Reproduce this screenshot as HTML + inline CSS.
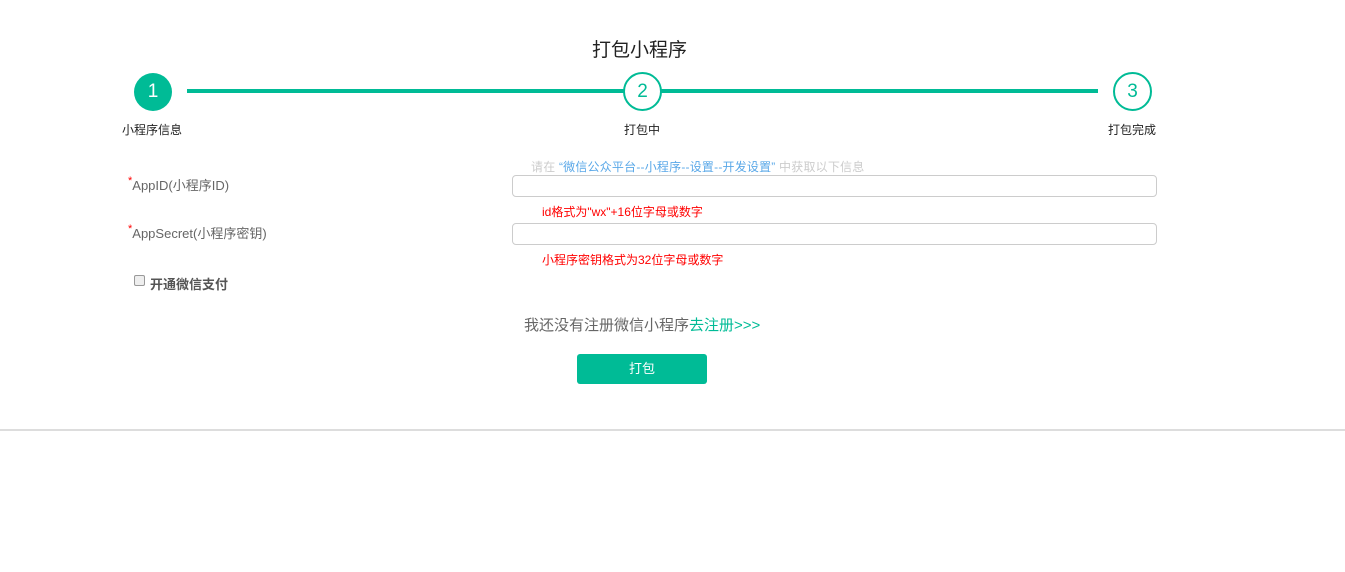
<!DOCTYPE html>
<html><head><meta charset="utf-8"><style>
body{margin:0;width:1345px;height:572px;background:#fff;position:relative;font-family:"Liberation Sans","Noto Sans CJK SC",sans-serif;overflow:hidden}
.a{position:absolute;white-space:nowrap}
.c{position:absolute;width:36px;height:36px;border-radius:50%;box-sizing:border-box;text-align:center;line-height:36px;font-size:19px}
.in{position:absolute;left:512px;width:645px;height:22px;border:1px solid #ccc;border-radius:4px;box-sizing:border-box}
</style></head><body>
<div class="a" style="left:592px;top:35px;font-size:19px;color:#222">打包小程序</div>
<div class="a" style="left:187px;top:89px;width:911px;height:4px;background:#00bb96"></div>
<div class="c" style="left:134px;top:73px;background:#00bb96;color:#fff;width:38px;height:38px;line-height:38px">1</div>
<div class="c" style="left:623px;top:72px;border:2px solid #00bb96;color:#00bb96;background:#fff;width:39px;height:39px;line-height:35px">2</div>
<div class="c" style="left:1113px;top:72px;border:2px solid #00bb96;color:#00bb96;background:#fff;width:39px;height:39px;line-height:35px">3</div>
<div class="a" style="left:122px;top:121px;font-size:12px;color:#222">小程序信息</div>
<div class="a" style="left:624px;top:121px;font-size:12px;color:#222">打包中</div>
<div class="a" style="left:1108px;top:121px;font-size:12px;color:#222">打包完成</div>
<div class="a" style="left:531px;top:158px;font-size:12px;color:#ccc;letter-spacing:0.2px">请在 <span style="color:#5aa8e8">“微信公众平台--小程序--设置--开发设置”</span> 中获取以下信息</div>
<div class="a" style="left:128px;top:175px;font-size:13px;color:#666"><span style="color:red;vertical-align:top;font-size:11px">*</span>AppID(小程序ID)</div>
<div class="in" style="top:175px"></div>
<div class="a" style="left:542px;top:203px;font-size:12px;color:red">id格式为"wx"+16位字母或数字</div>
<div class="a" style="left:128px;top:223px;font-size:13px;color:#666"><span style="color:red;vertical-align:top;font-size:11px">*</span>AppSecret(小程序密钥)</div>
<div class="in" style="top:223px"></div>
<div class="a" style="left:542px;top:251px;font-size:12px;color:red">小程序密钥格式为32位字母或数字</div>
<div class="a" style="left:134px;top:275px;width:11px;height:11px;border:1px solid #999;border-radius:2px;background:#eee;box-sizing:border-box"></div>
<div class="a" style="left:150px;top:274px;font-size:13px;color:#555;font-weight:bold">开通微信支付</div>
<div class="a" style="left:524px;top:314px;font-size:15px;color:#666">我还没有注册微信小程序<span style="color:#00bb96">去注册&gt;&gt;&gt;</span></div>
<div class="a" style="left:577px;top:354px;width:130px;height:30px;background:#00bb96;border-radius:3px;color:#fff;font-size:13px;text-align:center;line-height:30px">打包</div>
<div class="a" style="left:0;top:429px;width:1345px;height:2px;background:#ddd"></div>
</body></html>
